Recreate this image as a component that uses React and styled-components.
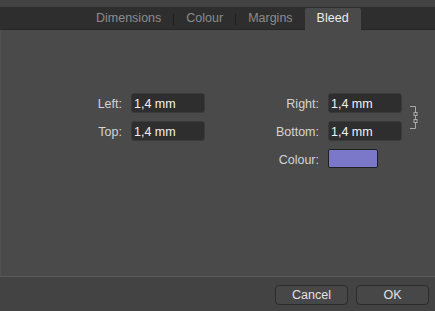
import styled, { createGlobalStyle } from "styled-components";

const GlobalStyle = createGlobalStyle`
  html, body {
    margin: 0;
    padding: 0;
    background: #434343;
  }
  body {
    font-family: "Liberation Sans", Arial, sans-serif;
    font-size: 12.5px;
  }
`;

const tabs = ["Dimensions", "Colour", "Margins", "Bleed"];
const activeTab = "Bleed";

function LinkIcon() {
  return (
    <svg width="8" height="23" viewBox="0 0 8 23" fill="none" stroke="#a9a9a9" strokeWidth="1">
      <path d="M0 0.5H5.5V6.5M5.5 9.5V13.5M5.5 16.5V22.5H0" />
      <rect x="4" y="6.5" width="3" height="3" />
      <rect x="4" y="13.5" width="3" height="3" />
    </svg>
  );
}

function App() {
  return (
    <>
      <GlobalStyle />
      <Window>
        <TopStrip />
        <TabBar>
          {tabs.map((t, i) => (
            <TabWrap key={t}>
              <Tab $active={t === activeTab}>{t}</Tab>
              {i < tabs.length - 2 && <Separator />}
            </TabWrap>
          ))}
        </TabBar>
        <Panel>
          <Form>
            <Label>Left:</Label>
            <Field>1,4 mm</Field>
            <Label>Right:</Label>
            <Field>1,4 mm</Field>
            <LinkCell>
              <LinkIcon />
            </LinkCell>
            <Label>Top:</Label>
            <Field>1,4 mm</Field>
            <Label>Bottom:</Label>
            <Field>1,4 mm</Field>
            <Spacer />
            <Spacer />
            <Label>Colour:</Label>
            <Swatch $color="#7b78c9" />
          </Form>
        </Panel>
        <Footer>
          <Button>Cancel</Button>
          <Button>OK</Button>
        </Footer>
      </Window>
    </>
  );
}

const Window = styled.div`
  width: 435px;
  height: 311px;
  display: flex;
  flex-direction: column;
  background: #434343;
  overflow: hidden;
`;

const TopStrip = styled.div`
  height: 7px;
  background: #434343;
`;

const TabBar = styled.div`
  height: 23px;
  display: flex;
  align-items: flex-end;
  padding-left: 84px;
  background: #2e2e2e;
  border-bottom: 1px solid #262626;
  box-sizing: border-box;
`;

const TabWrap = styled.div`
  display: flex;
  align-items: center;
  height: 100%;
`;

const Tab = styled.div`
  height: ${(p) => (p.$active ? "22px" : "100%")};
  margin-bottom: ${(p) => (p.$active ? "-1px" : "0")};
  display: flex;
  align-items: center;
  padding: 0 12px 1px;
  color: ${(p) => (p.$active ? "#ececec" : "#8c8c8c")};
  background: ${(p) => (p.$active ? "#4a4a4a" : "transparent")};
  border-radius: 2px 2px 0 0;
  box-sizing: border-box;
  font-size: 12.5px;
`;

const Separator = styled.div`
  width: 1px;
  height: 11px;
  margin-top: 2px;
  background: #1d1d1d;
`;

const Panel = styled.div`
  height: 247px;
  background: #4a4a4a;
  border-left: 1px solid #505050;
  border-bottom: 1px solid #5c5c5c;
  box-sizing: border-box;
  padding-top: 63px;
`;

const Form = styled.div`
  display: grid;
  grid-template-columns: 61px 74px 105px 74px 8px;
  grid-auto-rows: 20px;
  column-gap: 9px;
  row-gap: 8px;
  margin-left: 60px;
`;

const Label = styled.div`
  display: flex;
  align-items: center;
  justify-content: flex-end;
  padding-top: 1px;
  color: #d4d4d4;
  font-size: 12.5px;
`;

const Field = styled.div`
  display: flex;
  align-items: center;
  padding: 1px 0 0 2px;
  background: #2e2e2e;
  border: 1px solid #3a3a3a;
  border-radius: 3px;
  color: #f2f2f2;
  font-size: 12.5px;
  box-sizing: border-box;
`;

const LinkCell = styled.div`
  grid-row: span 2;
  display: flex;
  align-items: center;
  justify-content: flex-start;
  margin-left: -1px;
`;

const Spacer = styled.div``;

const Swatch = styled.div`
  width: 50px;
  height: 19px;
  background: ${(p) => p.$color};
  border: 1px solid #1f1f1f;
  border-radius: 2px;
  box-sizing: border-box;
`;

const Footer = styled.div`
  flex: 1;
  display: flex;
  justify-content: flex-end;
  align-items: center;
  gap: 8px;
  padding: 2px 6px 0 0;
`;

const Button = styled.div`
  width: 73px;
  height: 20px;
  display: flex;
  align-items: center;
  justify-content: center;
  background: #474747;
  border: 1px solid #2b2b2b;
  border-radius: 4px;
  color: #e2e2e2;
  font-size: 12.5px;
  box-sizing: border-box;
`;

export default App;
